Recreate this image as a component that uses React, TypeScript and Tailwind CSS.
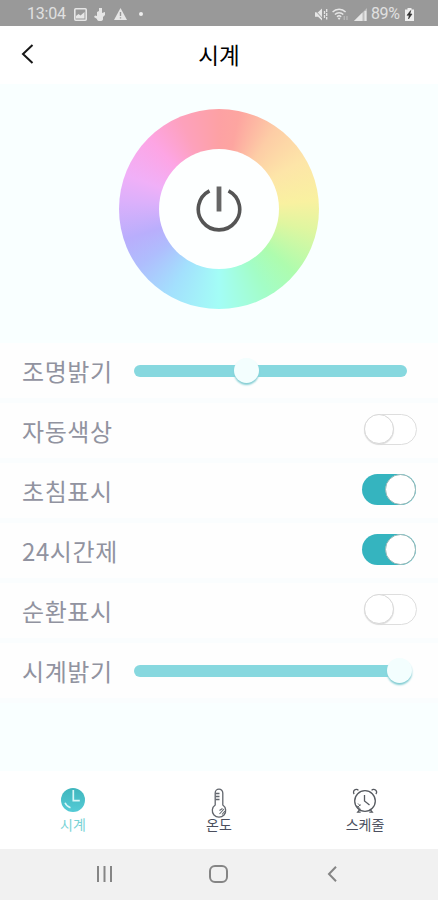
import type { ReactNode } from "react";

const WHEEL =
  "bg-[conic-gradient(#fda1a4_0deg,#fda5a0_12deg,#fdcda6_35deg,#fde5a8_60deg,#f9f1a0_85deg,#dff6a0_103deg,#aefcae_130deg,#a3fdc6_150deg,#a3fdf6_180deg,#a3e0fd_210deg,#afbdfd_235deg,#b9aefc_252deg,#dcb0fb_275deg,#f0b0f8_290deg,#fda5e4_315deg,#fda1bc_337deg,#fda1a4_360deg)]";

function StatusBar() {
  return (
    <div className="flex h-[26px] items-center bg-[#999] pt-[2px] pr-[24px] pl-[27px] font-['Roboto',sans-serif] text-[16px] text-[#e0e0e0]">
      <span className="w-[39px] tracking-[-0.2px]">13:04</span>
      <svg className="ml-[8px]" width="13" height="13" viewBox="0 0 13 13">
        <rect x="0.8" y="0.8" width="11.4" height="11.4" rx="1" fill="none" stroke="#e6e6e6" strokeWidth="1.6" />
        <path d="M2 10.5V8l2.5-2 2 1.5L10.5 4v6.5z" fill="#e6e6e6" />
      </svg>
      <svg className="ml-[7px]" width="12" height="13" viewBox="0 0 12 13" fill="#e6e6e6">
        <path d="M5 0h3v5l3-1v3L9 9v2a3 2 0 0 1-6 0l-3-2 1-1.5 2 .5V4l2-1z" />
      </svg>
      <svg className="ml-[8px]" width="13" height="12" viewBox="0 0 13 12">
        <path d="M6.5 0 13 12H0z" fill="#e6e6e6" />
        <path d="M6.5 4v4M6.5 9.2v1.4" stroke="#999" strokeWidth="1.4" />
      </svg>
      <span className="ml-[12px] size-[4px] rounded-full bg-[#eee]" />
      <div className="ml-auto flex items-center">
        <svg width="14" height="13" viewBox="0 0 14 13">
          <path d="M1 4.3h3l4-3.8v12l-4-3.8H1z" fill="#e6e6e6" />
          <path d="M0 1l10 11" stroke="#999" strokeWidth="1" />
          <path d="M10.5 3v7M12.7 1v10.5" stroke="#e6e6e6" strokeWidth="1.3" strokeDasharray="3 1" />
        </svg>
        <svg className="ml-[4px]" width="17" height="13" viewBox="0 0 17 13" fill="none" stroke="#e6e6e6" strokeWidth="1.4">
          <path d="M.6 4a9 9 0 0 1 13 0M2.9 6.4a6 6 0 0 1 8.4 0M5 8.7a3 3 0 0 1 4.2 0" />
          <path d="M7.1 12 5.5 9.7h3.2z" fill="#e6e6e6" stroke="none" />
          <path d="M12.2 8v4M15 8v4" stroke="#c0c0c0" strokeWidth="1" />
        </svg>
        <svg className="ml-[5px]" width="13" height="13" viewBox="0 0 13 13" fill="#e6e6e6">
          <path d="M0 13 13 0v13z" opacity=".5" />
          <path d="M0 13 8.5 4.5V13z" />
          <path d="M10.5 3h1.8v10h-1.8z" />
        </svg>
        <span className="ml-[4px] w-[30px] tracking-[-0.4px]">89%</span>
        <svg className="ml-[4px]" width="9" height="13" viewBox="0 0 9 13">
          <path d="M2.5 0h4v1.5H9V13H0V1.5h2.5z" fill="#eee" />
          <path d="M5.7 2.5 2 7.3h2.2L3.5 11 7 6H4.9z" fill="#333" stroke="#333" strokeWidth=".6" />
        </svg>
      </div>
    </div>
  );
}

function Header() {
  return (
    <header className="grid h-[58px] grid-cols-[60px_1fr_60px] items-center bg-white pb-[2px]">
      <svg className="ml-[21px]" width="13" height="20" viewBox="0 0 13 20" fill="none" stroke="#171717" strokeWidth="2">
        <path d="M11.5 1 2 10l9.5 9" />
      </svg>
      <h1 className="text-center text-[22.5px] leading-none font-normal text-black">시계</h1>
    </header>
  );
}

function ColorWheel() {
  return (
    <section className="flex h-[259px] justify-center pt-[25px]">
      <div className={`flex size-[200px] items-center justify-center rounded-full ${WHEEL}`}>
        <div className="flex size-[120px] items-center justify-center rounded-full bg-[#fdffff]">
          <svg width="48" height="48" viewBox="0 0 48 48" fill="none" stroke="#555" strokeWidth="3.6">
            <path d="M14.5 5.8a20.7 20.7 0 1 0 19 0" />
            <path d="M24 1.5v25" strokeWidth="4.8" stroke="#666" />
          </svg>
        </div>
      </div>
    </section>
  );
}

function Row({ label, children }: { label: string; children: ReactNode }) {
  return (
    <div className="flex h-[60px] items-center border-b-5 border-[#fafdfe] bg-[#fefefe] pl-[22px]">
      <span className="w-[112px] text-[24px] leading-none tracking-[0.6px] whitespace-nowrap text-[#9193a0]">
        {label}
      </span>
      {children}
    </div>
  );
}

function Slider({ knob }: { knob: string }) {
  return (
    <div className="relative h-[12px] w-[273px] rounded-full bg-[#87d8df]">
      <span
        className={`absolute -top-[7px] size-[25px] rounded-full bg-[#f3fefe] shadow-[0_2px_2px_#83cdd3] ${knob}`}
      />
    </div>
  );
}

function Toggle({ on }: { on?: boolean }) {
  if (on) {
    return (
      <div className="mr-[22px] mb-[2px] ml-auto flex h-[31px] w-[54px] justify-end rounded-full bg-[#35b4bf]">
        <span className="size-[31px] rounded-full border border-[#9cb9b8] bg-white" />
      </div>
    );
  }
  return (
    <div className="mr-[21px] mb-[2px] ml-auto flex h-[31px] w-[53px] rounded-full border border-[#dedede] bg-white">
      <span className="-mt-px -ml-px size-[30px] rounded-full border border-[#d8d8d8] bg-white shadow-[0_1px_1px_#ddd]" />
    </div>
  );
}

function Tab({ label, color, children }: { label: string; color: string; children: ReactNode }) {
  return (
    <div className="flex flex-1 flex-col items-center pt-[17px]">
      <div className="flex h-[29px] items-start">{children}</div>
      <span className={`text-[14px] leading-[15px] ${color}`}>{label}</span>
    </div>
  );
}

function TabBar() {
  return (
    <nav className="flex h-[78px] bg-white">
      <Tab label="시계" color="text-[#79d3d6]">
        <svg width="24" height="24" viewBox="0 0 24 24" fill="none">
          <defs>
            <linearGradient id="clock" x1="0" y1="0" x2="0" y2="1">
              <stop offset="0" stopColor="#3fb6bd" />
              <stop offset="1" stopColor="#55cbd6" />
            </linearGradient>
          </defs>
          <circle cx="12" cy="12" r="12" fill="url(#clock)" />
          <path d="M12.3 2v10.6h6.5" stroke="#d8f6f7" strokeWidth="1.7" />
          <path d="M4 14.8c.8 2 2.6 4 5.5 5" stroke="#d8f6f7" strokeWidth="1.6" />
        </svg>
      </Tab>
      <Tab label="온도" color="text-[#4b4f5e]">
        <svg width="18" height="30" viewBox="0 0 18 30" fill="none" stroke="#62666d" strokeWidth="1.3">
          <path d="M5.2 17V5a3.8 3.8 0 0 1 7.6 0v12a6.7 6.7 0 1 1-7.6 0z" />
          <path d="M5.5 5.5h4M5.5 8.5h4M5.5 11.5h4" />
          <path d="M9.5 26l4.5-5M12 26.5l3-3.5M9.5 22.5l3-2" strokeWidth="1.1" />
        </svg>
      </Tab>
      <Tab label="스케줄" color="text-[#4b4f5e]">
        <svg width="26" height="26" viewBox="0 0 26 26" fill="none" stroke="#565a60" strokeWidth="1.3">
          <circle cx="13" cy="13" r="10.3" />
          <path d="M12.5 7v6l5 4" />
          <path d="M2.2 6a2.6 2.6 0 1 1 4.2-3.6M23.8 6a2.6 2.6 0 1 0-4.2-3.6" />
          <path d="m7.5 21.8-1.8 2.4h3M18.5 21.8l1.8 2.4h-3" />
          <path d="m4.5 17.5 4 3.5M6 15.5l2.5 2.5M5.5 19.5l3-3" strokeWidth=".9" />
        </svg>
      </Tab>
    </nav>
  );
}

function SystemNav() {
  return (
    <div className="flex h-[51px] items-center bg-[#f1f1f1] pb-[2px] pl-[96px]">
      <svg width="17" height="16" viewBox="0 0 17 16" stroke="#858585" strokeWidth="2">
        <path d="M2 0v16M8.5 0v16M15 0v16" />
      </svg>
      <svg className="ml-[96px]" width="19" height="18" viewBox="0 0 19 18" fill="none" stroke="#858585" strokeWidth="2">
        <rect x="1" y="1" width="17" height="16" rx="5" />
      </svg>
      <svg className="ml-[99px]" width="11" height="16" viewBox="0 0 11 16" fill="none" stroke="#858585" strokeWidth="2">
        <path d="M9 .8 2 8l7 7.2" />
      </svg>
    </div>
  );
}

export default function App() {
  return (
    <main className="flex h-[900px] w-[438px] flex-col overflow-hidden bg-[#f9ffff] font-['Noto_Sans_CJK_KR',sans-serif]">
      <StatusBar />
      <Header />
      <ColorWheel />
      <section>
        <Row label="조명밝기">
          <Slider knob="left-[100px]" />
        </Row>
        <Row label="자동색상">
          <Toggle />
        </Row>
        <Row label="초침표시">
          <Toggle on />
        </Row>
        <Row label="24시간제">
          <Toggle on />
        </Row>
        <Row label="순환표시">
          <Toggle />
        </Row>
        <Row label="시계밝기">
          <Slider knob="right-[-5px]" />
        </Row>
      </section>
      <div className="flex-1" />
      <TabBar />
      <SystemNav />
    </main>
  );
}
